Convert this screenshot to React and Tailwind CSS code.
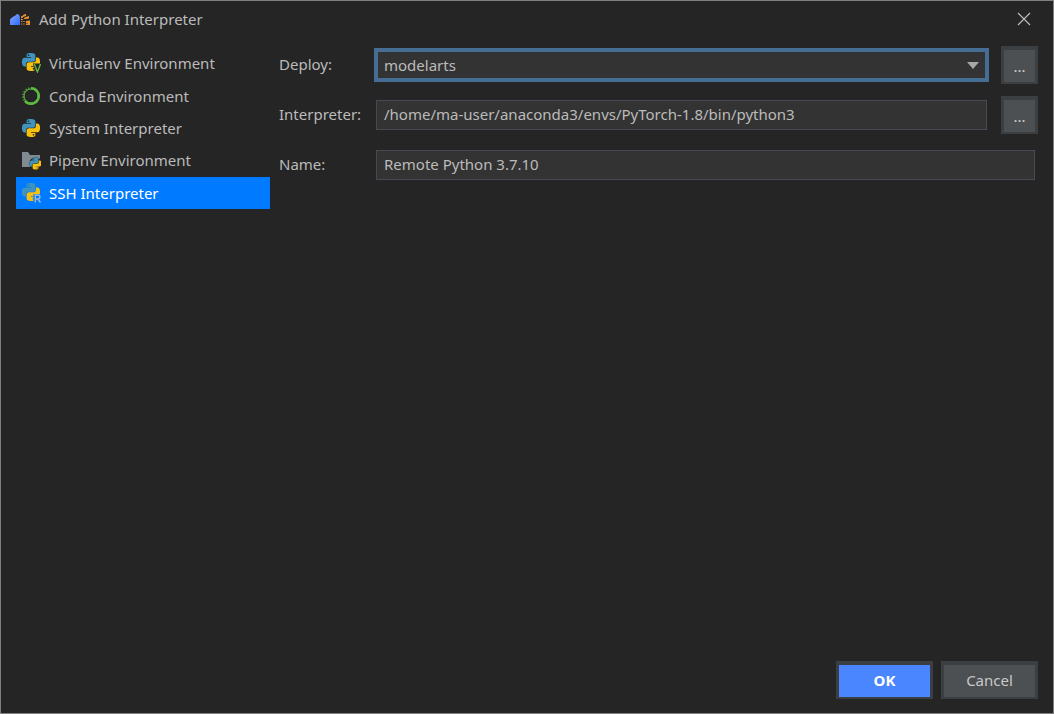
import { useState } from "react";

const SNAKE =
  "M14.25.18l.9.2.73.26.59.3.45.32.34.34.25.34.16.33.1.3.04.26.02.2-.01.13V8.5l-.05.63-.13.55-.21.46-.26.38-.3.31-.33.25-.35.19-.35.14-.33.1-.3.07-.26.04-.21.02H8.77l-.69.05-.59.14-.5.22-.41.27-.33.32-.27.35-.2.36-.15.37-.1.35-.07.32-.04.27-.02.21v3.06H3.17l-.21-.03-.28-.07-.32-.12-.35-.18-.36-.26-.36-.36-.35-.46-.32-.59-.28-.73-.21-.88-.14-1.05-.05-1.23.06-1.22.16-1.04.24-.87.32-.71.36-.57.4-.44.42-.33.42-.24.4-.16.36-.1.32-.05.24-.01h.16l.06.01h8.16v-.83H6.18l-.01-2.75-.02-.37.05-.34.11-.31.17-.28.25-.26.31-.23.38-.2.44-.18.51-.15.58-.12.64-.1.71-.06.77-.04.84-.02 1.27.05zm-6.3 1.98l-.23.33-.08.41.08.41.23.34.33.22.41.09.41-.09.33-.22.23-.34.08-.41-.08-.41-.23-.33-.33-.22-.41-.09-.41.09z";

function Snakes({ transform }) {
  return (
    <g transform={transform}>
      <path fill="#3f93bd" d={SNAKE} />
      <path fill="#f6c00c" d={SNAKE} transform="rotate(180 12 12)" />
    </g>
  );
}

function Icon({ children }) {
  return (
    <svg className="size-5 shrink-0" viewBox="0 0 20 20" fill="none" aria-hidden="true">
      {children}
    </svg>
  );
}

function VirtualenvIcon() {
  return (
    <Icon>
      <Snakes transform="translate(1 0) scale(.75)" />
      <path d="M12 10.500h8V20h-6z" fill="#252525" />
      <path d="M13.300 11l3.100 8 3.100-8" stroke="#62b543" strokeWidth="1.4" />
    </Icon>
  );
}

function CondaIcon() {
  return (
    <Icon>
      <path d="M10 2.200a7.800 7.800 0 1 1-6 12.800" stroke="#5fb843" strokeWidth="2.4" />
      <circle cx="10" cy="10" r="7.800" stroke="#5fb843" strokeWidth="2.2" strokeDasharray="1.6 1.2" opacity=".7" />
      <circle cx="10" cy="10" r="7" stroke="#5fb843" strokeWidth="1" />
    </Icon>
  );
}

function SystemIcon() {
  return (
    <Icon>
      <Snakes transform="translate(1 1) scale(.75)" />
    </Icon>
  );
}

function PipenvIcon() {
  return (
    <Icon>
      <path d="M1 2h6l2 3h10v12H1z" fill="#7f8b91" />
      <circle cx="14.5" cy="13.5" r="6.2" fill="#252525" />
      <Snakes transform="translate(8.5 7.5) scale(.5)" />
    </Icon>
  );
}

function SshIcon() {
  return (
    <Icon>
      <Snakes transform="translate(1 0) scale(.75)" />
      <path d="M12.500 11H20v9h-7.500z" fill="#007bff" />
      <path d="M14.300 19.500v-7.500h2.600a2 2 0 0 1 0 4h-2.600m2.400 0 2.800 3.500" stroke="#9fb8d0" strokeWidth="1.4" />
    </Icon>
  );
}

function AppIcon() {
  return (
    <svg className="h-4 w-5 shrink-0" viewBox="0 0 20 16" aria-hidden="true">
      <defs>
        <linearGradient id="dome" x1="0" y1="0" x2="1" y2="1">
          <stop offset="0" stopColor="#86a9ff" />
          <stop offset="1" stopColor="#2f69ff" />
        </linearGradient>
      </defs>
      <path d="M0 14V8.500Q1.500 6.500 3.500 5.500T7 3Q10 3 10 7.500V14z" fill="url(#dome)" />
      <path
        d="M11 5.500l2-1v2l-2 1zM13 4l3-1.200v2.200l-3 1zM16 6l3-1v2.500l-3 .5zM11 8h2v1h-2zM14 7l2-1v2h-2zM11 10h1.300v1H11zM13.300 10h1.300v1h-1.300zM16 10l4-.5V14h-4v-1.500h2V12h-2zM11 12.500h1.300v1H11zM13.300 12.500h1.300v1h-1.300z"
        fill="#e8912f"
      />
    </svg>
  );
}

const ENVIRONMENTS = [
  ["Virtualenv Environment", VirtualenvIcon],
  ["Conda Environment", CondaIcon],
  ["System Interpreter", SystemIcon],
  ["Pipenv Environment", PipenvIcon],
  ["SSH Interpreter", SshIcon],
];

const FIELD = "h-[30px] w-full border border-[#464a55] bg-[#333333] px-[7px] pb-0.5 text-[#bbbbbb] outline-none";

function BrowseButton({ label }) {
  return (
    <button
      type="button"
      aria-label={label}
      className="h-[38px] w-[37px] shrink-0 border-x-3 border-t-4 border-b-2 border-[#3c3f41] bg-[#4c5052] text-[#d0d0d0]"
    >
      ...
    </button>
  );
}

export default function App() {
  const [selected, setSelected] = useState("SSH Interpreter");
  const [interpreter, setInterpreter] = useState("/home/ma-user/anaconda3/envs/PyTorch-1.8/bin/python3");
  const [name, setName] = useState("Remote Python 3.7.10");

  return (
    <div className="flex min-h-screen flex-col border border-[#808080] bg-[#252525] font-['Noto_Sans',sans-serif] text-[15px] leading-5 text-[#bbbbbb]">
      <header className="flex h-9 items-center pr-[22px] pl-[9px]">
        <AppIcon />
        <h1 className="ml-[9px] flex-1">Add Python Interpreter</h1>
        <button type="button" aria-label="Close">
          <svg className="size-[14px]" viewBox="0 0 14 14" stroke="#bbbbbb" strokeWidth="1.2" aria-hidden="true">
            <path d="M1 1l12 12M13 1L1 13" />
          </svg>
        </button>
      </header>

      <main className="flex flex-1 items-start pr-[15px] pl-[15px]">
        <nav className="mt-[10px] grid h-[162px] w-[254px] shrink-0 grid-rows-5">
          {ENVIRONMENTS.map(([label, Glyph]) => (
            <button
              key={label}
              type="button"
              onClick={() => setSelected(label)}
              className={
                label === selected
                  ? "flex items-center gap-2 bg-[#007bff] pl-[5px] text-white"
                  : "flex items-center gap-2 pl-[5px]"
              }
            >
              <Glyph />
              {label}
            </button>
          ))}
        </nav>

        <form className="mt-[9px] ml-[9px] grid flex-1 grid-cols-[95px_1fr] gap-y-3">
          <label htmlFor="deploy" className="self-center pb-0.5">Deploy:</label>
          <div className="flex items-center gap-3">
            <div className="relative flex-1">
              <select
                id="deploy"
                className="block h-[34px] w-full appearance-none border-4 border-[#466d94] bg-[#333333] px-[6px] text-[#bbbbbb] outline-none"
              >
                <option>modelarts</option>
              </select>
              <svg
                className="pointer-events-none absolute top-[14px] right-[10px] h-[7px] w-3"
                viewBox="0 0 12 7"
                fill="#a5a7ab"
                aria-hidden="true"
              >
                <path d="M0 0h12L6 7z" />
              </svg>
            </div>
            <BrowseButton label="Browse deployments" />
          </div>

          <label htmlFor="interpreter" className="self-center pb-0.5">Interpreter:</label>
          <div className="flex items-center gap-[14px] pl-[2px]">
            <input
              id="interpreter"
              className={FIELD}
              value={interpreter}
              onChange={(e) => setInterpreter(e.target.value)}
            />
            <BrowseButton label="Browse interpreters" />
          </div>

          <label htmlFor="name" className="self-center pb-0.5">Name:</label>
          <div className="flex h-[38px] items-center pr-[3px] pl-[2px]">
            <input id="name" className={FIELD} value={name} onChange={(e) => setName(e.target.value)} />
          </div>
        </form>
      </main>

      <footer className="flex justify-end gap-2 px-[15px] pb-[14px]">
        <button
          type="button"
          className="h-[38px] w-[97px] border-x-3 border-t-4 border-b-2 border-[#3c3f41] bg-[#4a86ff] pb-0.5 font-bold text-white"
        >
          OK
        </button>
        <button
          type="button"
          className="h-[38px] w-[97px] border-x-3 border-t-4 border-b-2 border-[#3c3f41] bg-[#4c5052] pb-0.5 text-[#c8c8c8]"
        >
          Cancel
        </button>
      </footer>
    </div>
  );
}
